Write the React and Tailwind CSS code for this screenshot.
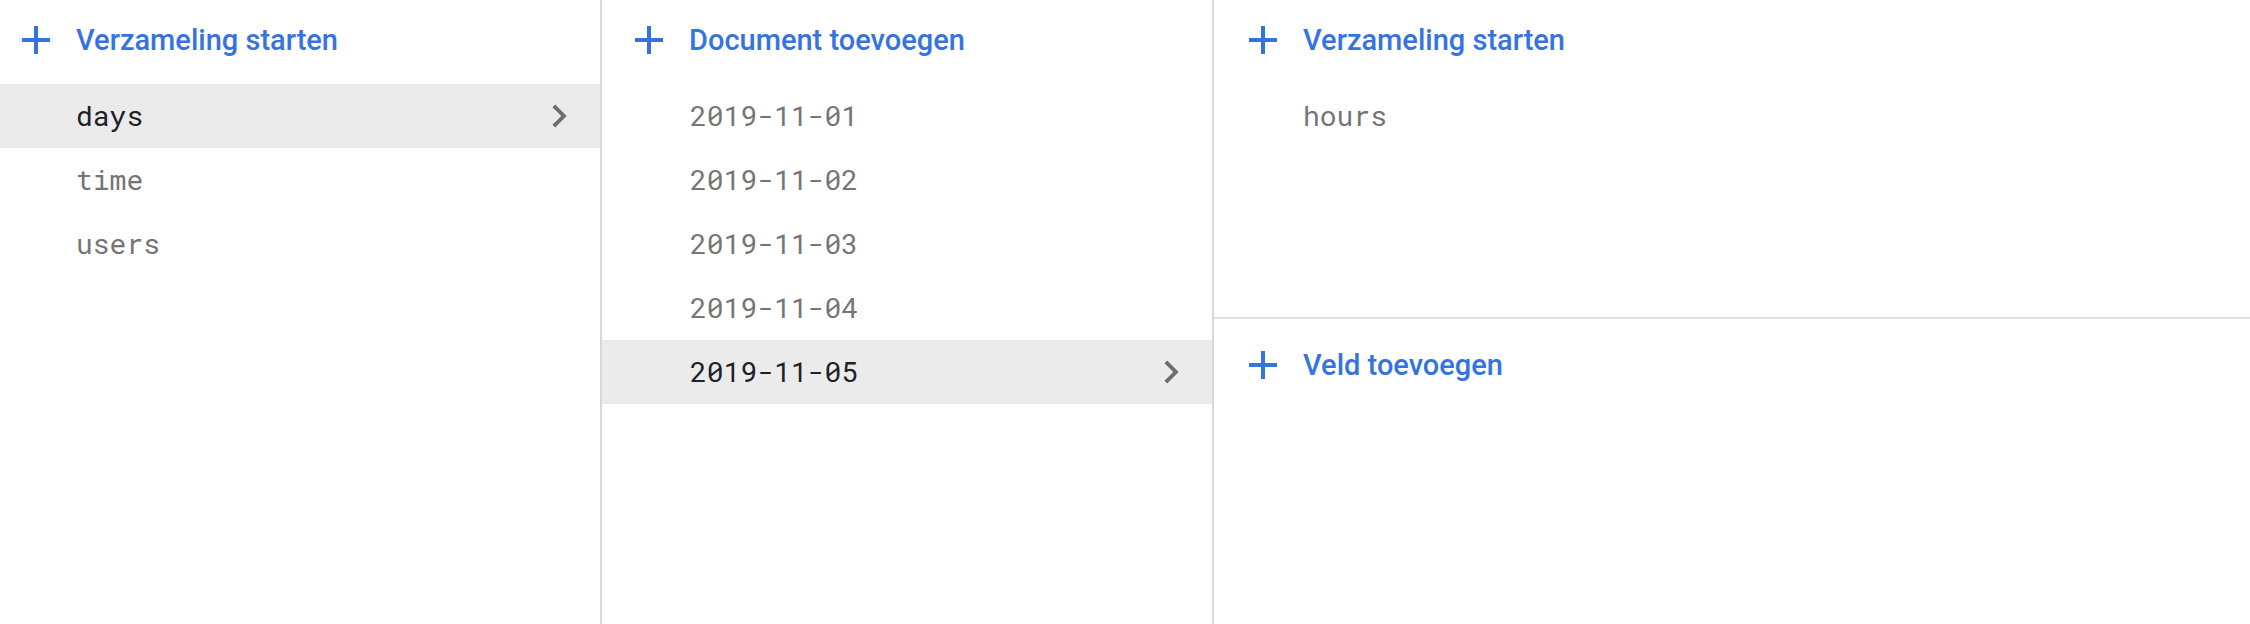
import React from "react";

const BLUE = "text-[#3574e0]";

function PlusIcon() {
  return (
    <svg viewBox="0 0 24 24" className="w-[48px] h-[48px] shrink-0" fill="currentColor">
      <path d="M19 13h-6v6h-2v-6H5v-2h6V5h2v6h6v2z" />
    </svg>
  );
}

function Chevron() {
  return (
    <svg viewBox="0 0 24 24" className="w-[46px] h-[46px] shrink-0 text-[#6e6e6e]" fill="currentColor">
      <path d="M10 6L8.59 7.41 13.17 12l-4.58 4.59L10 18l6-6z" />
    </svg>
  );
}

function ActionRow({ label, indent }) {
  return (
    <div className={`flex items-center h-[80px] ${indent} gap-[16px] ${BLUE}`}>
      <PlusIcon />
      <span className="text-[29px] font-medium font-['Roboto',sans-serif] leading-none">{label}</span>
    </div>
  );
}

function ItemRow({ label, selected, textLeft }) {
  return (
    <div
      className={`flex items-center justify-between h-[64px] ${textLeft} pr-[18px] ${
        selected ? "bg-[#ebebeb] text-[#202124]" : "text-[#757575]"
      }`}
    >
      <span className="text-[28px] font-['Roboto_Mono','DejaVu_Sans_Mono',monospace] leading-none">{label}</span>
      {selected && <Chevron />}
    </div>
  );
}

export default function App() {
  const collections = ["days", "time", "users"];
  const docs = ["2019-11-01", "2019-11-02", "2019-11-03", "2019-11-04", "2019-11-05"];

  return (
    <div className="flex w-[2250px] h-[624px] bg-white overflow-hidden">
      {/* collections */}
      <div className="w-[602px] h-full border-r-2 border-[#dadada] flex flex-col">
        <ActionRow label="Verzameling starten" indent="pl-[12px]" />
        <div className="pt-[4px]">
          {collections.map((c) => (
            <ItemRow key={c} label={c} selected={c === "days"} textLeft="pl-[76px]" />
          ))}
        </div>
      </div>

      {/* documents */}
      <div className="w-[612px] h-full border-r-2 border-[#dadada] flex flex-col">
        <ActionRow label="Document toevoegen" indent="pl-[23px]" />
        <div className="pt-[4px]">
          {docs.map((d) => (
            <ItemRow key={d} label={d} selected={d === "2019-11-05"} textLeft="pl-[88px]" />
          ))}
        </div>
      </div>

      {/* document detail */}
      <div className="flex-1 h-full flex flex-col">
        <div className="h-[319px] border-b-2 border-[#e0e0e0]">
          <ActionRow label="Verzameling starten" indent="pl-[25px]" />
          <div className="pt-[4px]">
            <ItemRow label="hours" textLeft="pl-[89px]" />
          </div>
        </div>
        <div className="pt-[6px]">
          <ActionRow label="Veld toevoegen" indent="pl-[25px]" />
        </div>
      </div>
    </div>
  );
}
